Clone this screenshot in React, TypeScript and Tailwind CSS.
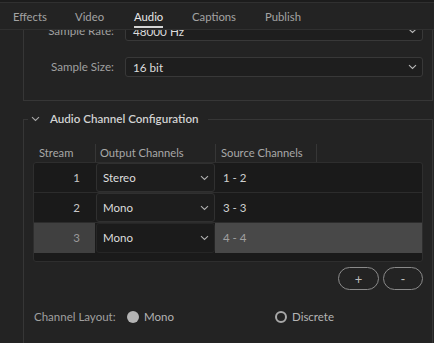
import React from "react";

const Chevron = ({ className = "" }: { className?: string }) => (
  <svg width="9" height="6" viewBox="0 0 9 6" className={className} fill="none">
    <path d="M1 1.2 L4.5 4.5 L8 1.2" stroke="currentColor" strokeWidth="1.1" />
  </svg>
);

function Tab({ label, active, w }: { label: string; active?: boolean; w: string }) {
  return (
    <div className={`${w} h-full flex items-end pb-[1px]`}>
      <span
        className={`leading-[16px] pb-[1px] border-b-2 text-[11.3px] ${
          active ? "border-[#d4d4d4] text-[#e8e8e8]" : "border-transparent text-[#a3a3a3]"
        }`}
      >
        {label}
      </span>
    </div>
  );
}

function Select({ value }: { value: string }) {
  return (
    <div className="flex-1 h-[20px] rounded-[3px] border border-[#383838] bg-[#1e1e1e] flex items-center justify-between pl-[7px] pr-[5px] text-[#dcdcdc]">
      <span className="leading-[16px] text-[11.7px]">{value}</span>
      <Chevron className="text-[#b8b8b8]" />
    </div>
  );
}

function Row({
  n,
  out,
  src,
  selected,
}: {
  n: string;
  out: string;
  src: string;
  selected?: boolean;
}) {
  return (
    <div className={`h-[30px] flex ${selected ? "" : "border-b border-[#2c2c2c]"}`}>
      <div
        className={`w-[61px] flex items-center justify-end pr-[15px] ${
          selected ? "bg-[#404040] text-[#9a9a9a]" : "text-[#c8c8c8]"
        }`}
      >
        {n}
      </div>
      <div
        className={`w-[119px] ml-[1px] rounded-[3px] border ${
          selected ? "border-[#262626] bg-[#1b1b1b]" : "border-[#303030] bg-[#1d1d1d]"
        } flex items-center justify-between pl-[6px] pr-[5px] text-[#dedede]`}
      >
        <span>{out}</span>
        <Chevron className="text-[#b0b0b0]" />
      </div>
      <div
        className={`flex-1 flex items-center pl-[8px] ${
          selected ? "bg-[#484848] text-[#a0a0a0]" : "text-[#cfcfcf]"
        }`}
      >
        {src}
      </div>
    </div>
  );
}

export default function App() {
  return (
    <div className="w-[434px] h-[343px] overflow-hidden bg-[#232323] text-[11px] leading-[16px] text-[#c4c4c4] flex flex-col font-['Lato','Open_Sans',sans-serif]">
      {/* tab bar */}
      <div className="shrink-0 bg-[#1c1c1c] pt-[2px]">
        <div className="h-[28px] bg-[#232323] border-t border-b border-[#303030] flex pl-[13px]">
          <Tab label="Effects" w="w-[62px]" />
          <Tab label="Video" w="w-[59px]" />
          <Tab label="Audio" w="w-[58px]" active />
          <Tab label="Captions" w="w-[73px]" />
          <Tab label="Publish" w="w-[60px]" />
        </div>
      </div>

      {/* content */}
      <div className="flex-1 overflow-hidden">
        <div className="mt-[-9px] pr-[1px]">
          {/* box 1 */}
          <div className="ml-[23px] border-l border-r border-b border-[#363636] pb-[23px] flex flex-col gap-[16px]">
            <div className="flex items-center">
              <div className="w-[90px] text-right text-[#a0a0a0] text-[11.6px]">Sample Rate:</div>
              <div className="w-[11px]" />
              <div className="flex-1 mr-[9px] flex">
                <Select value="48000 Hz" />
              </div>
            </div>
            <div className="flex items-center">
              <div className="w-[90px] text-right text-[#a0a0a0] text-[11.6px]">Sample Size:</div>
              <div className="w-[11px]" />
              <div className="flex-1 mr-[9px] flex">
                <Select value="16 bit" />
              </div>
            </div>
          </div>

          {/* box 2 */}
          <fieldset className="ml-[23px] mt-[10px] border-l border-r border-t border-[#363636] h-[260px]">
            <legend className="ml-[4px] pl-[3px] pr-[9px] flex items-center">
              <Chevron className="text-[#a8a8a8] mr-[10px]" />
              <span className="font-semibold text-[11.6px] text-[#d2d2d2]">Audio Channel Configuration</span>
            </legend>

            {/* header */}
            <div className="mt-[17px] ml-[9px] h-[18px] flex text-[#a8a8a8] text-[11.2px]">
              <div className="w-[62px] pl-[6px] flex items-center">Stream</div>
              <div className="w-[120px] border-l border-[#363636] pl-[4px] flex items-center">
                Output Channels
              </div>
              <div className="w-[101px] border-l border-[#363636] pl-[5px] flex items-center">
                Source Channels
              </div>
              <div className="border-l border-[#363636]" />
            </div>

            {/* body */}
            <div className="ml-[9px] mr-[9px] rounded-[3px] border border-[#2e2e2e] bg-[#1a1a1a] pb-[8px] text-[11.5px]">
              <Row n="1" out="Stereo" src="1 - 2" />
              <Row n="2" out="Mono" src="3 - 3" />
              <Row n="3" out="Mono" src="4 - 4" selected />
            </div>

            {/* buttons */}
            <div className="mt-[5px] mr-[9px] flex justify-end gap-[4px]">
              <button className="w-[41px] h-[23px] rounded-full border border-[#8a8a8a] text-[#bdbdbd] flex items-center justify-center text-[13px]">
                +
              </button>
              <button className="w-[40px] h-[23px] rounded-full border border-[#8a8a8a] text-[#bdbdbd] flex items-center justify-center text-[13px]">
                -
              </button>
            </div>

            {/* channel layout */}
            <div className="mt-[19px] ml-[10px] flex items-center h-[16px] text-[11.5px]">
              <div className="w-[93px] text-[#a0a0a0]">Channel Layout:</div>
              <div className="w-[148px] flex items-center gap-[5px]">
                <span className="w-[12px] h-[12px] rounded-full bg-[#b4b4b4]" />
                <span className="text-[#b4b4b4]">Mono</span>
              </div>
              <div className="flex items-center gap-[5px]">
                <span className="w-[12px] h-[12px] rounded-full border-2 border-[#a8a8a8]" />
                <span className="text-[#b4b4b4]">Discrete</span>
              </div>
            </div>
          </fieldset>
        </div>
      </div>
    </div>
  );
}
